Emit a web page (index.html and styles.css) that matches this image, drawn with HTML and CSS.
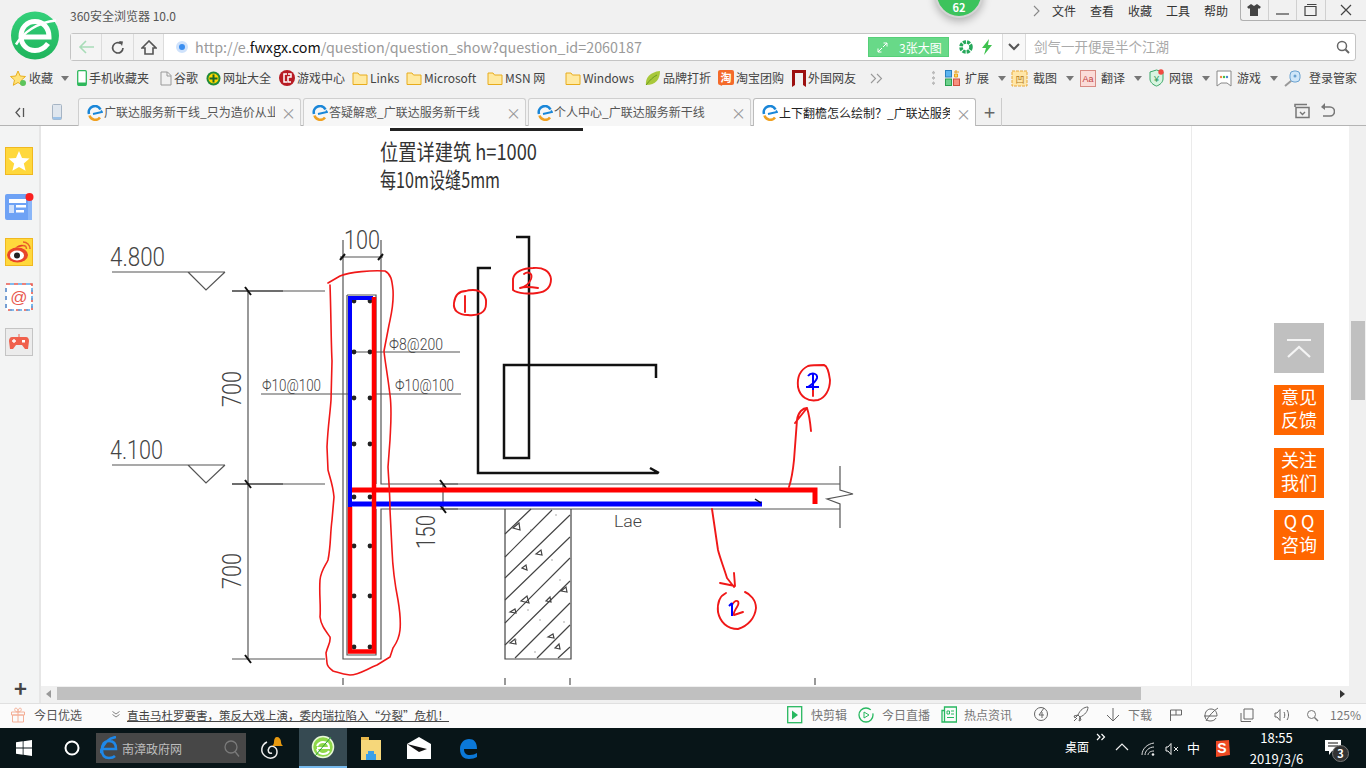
FILE: index.html
```html
<!DOCTYPE html>
<html lang="zh-CN">
<head>
<meta charset="utf-8">
<title>360安全浏览器</title>
<link rel="stylesheet" href="styles.css">
</head>
<body>
<svg class="defs" width="0" height="0" aria-hidden="true">
  <symbol id="folder" viewBox="0 0 16 16"><path d="M1 3h5l1.500 2H15v9.500H1z" fill="#ffe9a0" stroke="#e8ac1c"/></symbol>
  <symbol id="tabe" viewBox="0 0 16 16"><path d="M2 9a6.200 6.200 0 0 1 11.500-4.500" fill="none" stroke="#1a86d8" stroke-width="2.600"/><path d="M14 5.500l1 1.500-9 2" fill="none" stroke="#1a86d8" stroke-width="1.800"/><path d="M2.500 10.500a6 6 0 0 0 10.500 2" fill="none" stroke="#f0a020" stroke-width="2.600"/></symbol>
  <symbol id="caret" viewBox="0 0 8 5"><path d="M0 0h8L4 5z" fill="#777"/></symbol>
</svg>

<div class="chrome">
  <header class="top">
    <div class="logo-col">
      <svg class="logo" viewBox="0 0 48 48"><defs><linearGradient id="lg" x1="0" y1="0" x2="0" y2="1"><stop offset="0" stop-color="#34d07a"/><stop offset="1" stop-color="#1fb45c"/></linearGradient></defs><circle cx="24" cy="24" r="24" fill="url(#lg)"/><path d="M10 25.500H38C38 16 32 10 24 10C16 10 10 16 10 25C10 33 16 39 24 39C30 39 34 36 37 32" fill="none" stroke="#fff" stroke-width="5"/><path d="M5 33C12 21 26 11 45 9" fill="none" stroke="#fff" stroke-width="2.500"/></svg>
    </div>
    <div class="top-right">
      <div class="title-row">
        <span class="app-title">360安全浏览器 10.0</span>
        <svg class="menu-chev" width="7" height="12" viewBox="0 0 7 12"><path d="M1 1l5 5-5 5" fill="none" stroke="#888" stroke-width="1.100"/></svg>
        <nav class="menu"><span>文件</span><span>查看</span><span>收藏</span><span>工具</span><span>帮助</span></nav>
        <div class="winbtns">
          <span class="wb"><svg width="14" height="12" viewBox="0 0 14 12"><path d="M4 0L0 3l2 2 1-1v8h8V4l1 1 2-2-4-3-3 2z" fill="#444"/></svg></span>
          <span class="wb"><svg width="13" height="12" viewBox="0 0 13 12"><path d="M0 10h13" stroke="#444" stroke-width="1.200"/></svg></span>
          <span class="wb wb3"><svg width="13" height="12" viewBox="0 0 13 12"><path d="M1 2.500h11v9H1zM3 .5h9.500" fill="none" stroke="#444" stroke-width="1.200"/></svg></span>
          <span class="wb wb4"><svg width="12" height="12" viewBox="0 0 12 12"><path d="M1 1l10 10M11 1L1 11" stroke="#444" stroke-width="1.200"/></svg></span>
        </div>
      </div>
      <div class="addr">
        <span class="nav-btn nb1"><svg width="17" height="14" viewBox="0 0 17 14"><path d="M16 7H2M8 1L2 7l6 6" fill="none" stroke="#a8dcb8" stroke-width="1.600"/></svg></span>
        <span class="nav-btn nb2"><svg width="14" height="15" viewBox="0 0 14 15"><path d="M12 8a5.200 5.200 0 1 1-2-4.300" fill="none" stroke="#555" stroke-width="1.700"/><path d="M8 1l4 .5L11 6z" fill="#555"/></svg></span>
        <span class="nav-btn nb3"><svg width="16" height="15" viewBox="0 0 16 15"><path d="M1 8l7-7 7 7h-3v6H4V8z" fill="none" stroke="#555" stroke-width="1.600"/></svg></span>
        <span class="url-dot"></span>
        <span class="url">http://e.<b>fwxgx.com</b>/question/question_show?question_id=2060187</span>
        <span class="big-pic"><svg width="11" height="11" viewBox="0 0 11 11"><path d="M6.500 1H10v3.500M10 1L6 5M4.500 10H1V6.500M1 10l4-4" fill="none" stroke="#fff"/></svg><span>3张大图</span></span>
        <svg class="shield" width="14" height="14" viewBox="0 0 14 14"><circle cx="7" cy="7" r="5" fill="none" stroke="#25a85a" stroke-width="3.600" stroke-dasharray="3 1"/></svg>
        <svg class="bolt" width="12" height="16" viewBox="0 0 12 16"><path d="M8 0L1 9h4l-2 7 8-10H7z" fill="#3ec24e"/></svg>
        <span class="addr-drop"><svg width="12" height="8" viewBox="0 0 12 8"><path d="M1 1l5 5 5-5" fill="none" stroke="#555" stroke-width="2"/></svg></span>
        <span class="search-text">剑气一开便是半个江湖</span>
        <svg class="search-ico" width="14" height="14" viewBox="0 0 14 14"><circle cx="6" cy="6" r="4.500" fill="none" stroke="#666" stroke-width="1.500"/><path d="M9.500 9.500L13 13" stroke="#666" stroke-width="2"/></svg>
      </div>
    </div>
  </header>

  <div class="bookmarks">
    <span class="bm"><svg width="17" height="17" viewBox="0 0 17 17"><path d="M8 1l2.200 5 5.300.5-4 3.500 1.200 5.300L8 12.500l-4.700 2.800L4.500 10l-4-3.500L5.800 6z" fill="#ffe27a" stroke="#e8b020"/><circle cx="13" cy="13" r="3" fill="#5cc45c"/></svg>收藏<svg class="caret car-fav"><use href="#caret"/></svg></span>
    <span class="bm"><svg width="10" height="16" viewBox="0 0 10 16"><rect x=".7" y=".7" width="8.600" height="14.600" rx="1" fill="#fff" stroke="#2eb85c" stroke-width="1.300"/><path d="M1 12.500h8v3H1z" fill="#2eb85c"/></svg>手机收藏夹</span>
    <span class="bm"><svg width="12" height="15" viewBox="0 0 12 15"><path d="M1 1h6.500L11 4.500V14H1zM7 1v4h4" fill="none" stroke="#999"/></svg>谷歌</span>
    <span class="bm"><svg width="15" height="15" viewBox="0 0 15 15"><circle cx="7.500" cy="7.500" r="7" fill="#1f8a3a"/><circle cx="7.500" cy="7.500" r="5" fill="#ffd800"/><path d="M7.500 3.500v8M3.500 7.500h8" stroke="#1a6a2a" stroke-width="2"/></svg>网址大全</span>
    <span class="bm"><svg width="16" height="16" viewBox="0 0 16 16"><circle cx="8" cy="8" r="8" fill="#b81c24"/><path d="M8 4H5v8h3M9 4h3v3H9v5h3" fill="none" stroke="#fff" stroke-width="1.500"/></svg>游戏中心</span>
    <span class="bm"><svg class="fold"><use href="#folder"/></svg>Links</span>
    <span class="bm"><svg class="fold"><use href="#folder"/></svg>Microsoft</span>
    <span class="bm"><svg class="fold"><use href="#folder"/></svg>MSN 网</span>
    <span class="bm"><svg class="fold"><use href="#folder"/></svg>Windows</span>
    <span class="bm"><svg width="16" height="16" viewBox="0 0 16 16"><path d="M1 15C0 8 5 2 15 1c0 8-4 14-14 14z" fill="#a8c83a"/><path d="M1 15C5 10 8 7 12 5" stroke="#6a9a20" fill="none"/></svg>品牌打折</span>
    <span class="bm"><svg width="16" height="17" viewBox="0 0 16 17"><rect width="16" height="15" rx="2" fill="#f46a2a"/><path d="M3 16l3-2H2z" fill="#f46a2a"/><text x="8" y="12" class="taobao">淘</text></svg>淘宝团购</span>
    <span class="bm"><svg width="14" height="17" viewBox="0 0 14 17"><path d="M0 0h14v17l-3-2V3H3v12l-3 2z" fill="#9c1010"/></svg>外国网友</span>
    <span class="bm more"><svg width="14" height="11" viewBox="0 0 14 11"><path d="M1 1l4.500 4.500L1 10M7 1l4.500 4.500L7 10" fill="none" stroke="#999" stroke-width="1.100"/></svg></span>
    <span class="bm dots"></span>
    <span class="bm wide"><svg width="15" height="16" viewBox="0 0 15 16"><rect x=".5" y=".5" width="6" height="6.500" fill="#5cb4f0" stroke="#2a80c0"/><path d="M11 0v3M9 2h5M9.500 4h3v3h-3z" stroke="#e8a020" fill="#ffd860"/><rect x=".5" y="9" width="6" height="6.500" fill="#6cd08c" stroke="#2aa050"/><rect x="8.500" y="9" width="6" height="6.500" fill="#f89080" stroke="#d05040"/></svg>扩展<svg class="caret car-r"><use href="#caret"/></svg></span>
    <span class="bm wide"><svg width="17" height="17" viewBox="0 0 17 17"><rect x="1" y="1" width="15" height="15" fill="#ffe6a8" stroke="#e8a838" stroke-dasharray="3 1"/><text x="9" y="13" class="cap">凹</text></svg>截图<svg class="caret car-r"><use href="#caret"/></svg></span>
    <span class="bm wide"><svg width="16" height="17" viewBox="0 0 16 17"><rect x=".5" y=".5" width="15" height="16" fill="#fbdcd8" stroke="#d88c84"/><text x="8" y="12" class="aa">Aa</text></svg>翻译<svg class="caret car-r"><use href="#caret"/></svg></span>
    <span class="bm wide"><svg width="15" height="18" viewBox="0 0 15 18"><path d="M1 3l6.500-2L14 3v7c0 3-3 6-6.500 7C4 16 1 13 1 10z" fill="#d8f4e0" stroke="#3aa868"/><text x="7.500" y="13" class="yen">&#xA5;</text><circle cx="12" cy="3" r="2.700" fill="#f04a40"/></svg>网银<svg class="caret car-r"><use href="#caret"/></svg></span>
    <span class="bm wide"><svg width="16" height="17" viewBox="0 0 16 17"><path d="M1 1h14v15l-4-3H5l-4 3z" fill="#fff" stroke="#888"/><circle cx="5" cy="7" r="1.200" fill="#e84"/><circle cx="8" cy="7" r="1.200" fill="#4b4"/><circle cx="11" cy="7" r="1.200" fill="#48c"/></svg>游戏<svg class="caret car-r"><use href="#caret"/></svg></span>
    <span class="bm wide login"><svg width="17" height="17" viewBox="0 0 17 17"><rect x="6" y="1" width="10" height="11" rx="4" fill="#cfe6f8" stroke="#6aa2d0"/><circle cx="11" cy="6" r="1.500" fill="#6aa2d0"/><path d="M7 11l-6 5" stroke="#999" stroke-width="2"/></svg>登录管家</span>
  </div>

  <div class="tabbar">
    <span class="tab-side"><svg width="10" height="11" viewBox="0 0 10 11"><path d="M5 1L1 5.500 5 10M8.500 1v9" fill="none" stroke="#555" stroke-width="1.300"/></svg></span>
    <span class="tab-phone"><svg width="10" height="16" viewBox="0 0 10 16"><rect x=".5" y=".5" width="9" height="15" rx="1" fill="#dfe6ee" stroke="#a6b4c4"/><path d="M1 13h8v2.500H1z" fill="#9cc2e8"/></svg></span>
    <div class="tab"><svg class="fav"><use href="#tabe"/></svg><span class="tab-t">广联达服务新干线_只为造价从业人员服务</span><span class="tab-x">&#xD7;</span></div>
    <div class="tab"><svg class="fav"><use href="#tabe"/></svg><span class="tab-t">答疑解惑_广联达服务新干线</span><span class="tab-x">&#xD7;</span></div>
    <div class="tab"><svg class="fav"><use href="#tabe"/></svg><span class="tab-t">个人中心_广联达服务新干线</span><span class="tab-x">&#xD7;</span></div>
    <div class="tab active"><svg class="fav"><use href="#tabe"/></svg><span class="tab-t">上下翻檐怎么绘制？_广联达服务新干线</span><span class="tab-x">&#xD7;</span></div>
    <span class="tab-add">+</span>
    <span class="tab-tools">
      <svg width="16" height="16" viewBox="0 0 16 16"><path d="M1 4V1.500h12M2 14.500V4.500h13v10z" fill="none" stroke="#777" stroke-width="1.500"/><path d="M6 9l2.500 2.500L11 9" fill="none" stroke="#777" stroke-width="1.400"/></svg>
      <svg width="15" height="16" viewBox="0 0 15 16"><path d="M4 4h6a4 4 0 0 1 0 9H3" fill="none" stroke="#777" stroke-width="1.600"/><path d="M5 0v7L1 4z" fill="#777"/></svg>
    </span>
  </div>
</div>

<div class="middle">
  <aside class="sidebar">
    <span class="sb-ico"><svg width="28" height="28" viewBox="0 0 28 28"><rect x=".5" y=".5" width="27" height="27" fill="#ffd83c" stroke="#f0b820"/><path d="M14 4l3 7 7.500.6-5.700 4.900 1.800 7.300L14 20l-6.600 3.800 1.800-7.300L3.500 11.600 11 11z" fill="#fff"/></svg></span>
    <span class="sb-ico sb2"><svg width="29" height="27" viewBox="0 0 29 27"><rect y="1" width="27" height="26" rx="2" fill="#6ea2f5"/><path d="M23 4h4v23h-4z" fill="#8ab6f8"/><path d="M4 6h17v4H4z" fill="#fff"/><path d="M4 12h5v8H4z" fill="#cfe0fb"/><path d="M11 12h10v2.500H11zM11 17h8v2.500h-8z" fill="#fff"/><circle cx="24.500" cy="4" r="4" fill="#fa2020"/></svg></span>
    <span class="sb-ico sb3"><svg width="28" height="28" viewBox="0 0 28 28"><rect x=".5" y=".5" width="27" height="27" fill="#ffd83c" stroke="#f0b820"/><ellipse cx="12.500" cy="17" rx="10.500" ry="7.500" fill="#e8452a"/><path d="M10 10c4-4 8-4 9-2" fill="#e8452a"/><ellipse cx="12" cy="17.500" rx="7" ry="5" fill="#fff"/><circle cx="12" cy="17.500" r="3" fill="#222"/><path d="M18 4c4 0 7 3 7 7M18 7.500c2 0 3.500 1.500 3.500 3.500" fill="none" stroke="#e8652a" stroke-width="1.500"/></svg></span>
    <span class="sb-ico sb4"><svg width="28" height="28" viewBox="0 0 28 28"><rect x="1" y="1" width="26" height="26" fill="#fff" stroke="#e85a50" stroke-width="1.600" stroke-dasharray="4 4"/><path d="M5 1h4M13 1h4M21 1h4M27 5v4M27 13v4M27 21v4M5 27h4M13 27h4M21 27h4M1 5v4M1 13v4M1 21v4" stroke="#58a8ec" stroke-width="1.600"/><text x="14" y="20" class="at">@</text></svg></span>
    <span class="sb-ico sb5"><svg width="28" height="28" viewBox="0 0 28 28"><rect x=".5" y=".5" width="27" height="27" fill="#ececec" stroke="#c4c4c4"/><path d="M7 9h14c2 0 3 2 3 4l-1 8h-3l-3-4h-6l-3 4H5l-1-8c0-2 1-4 3-4z" fill="#f0604c"/><path d="M9 11v4M7 13h4" stroke="#fff" stroke-width="1.300"/><rect x="17" y="12" width="3" height="2.500" fill="#fff"/><path d="M13.500 9V6h1v3z" fill="#f0604c"/></svg></span>
    <span class="sb-plus">+</span>
  </aside>

  <div class="content">
    <div class="view">
      <main class="page">
        <svg class="draw" width="1151" height="560" viewBox="41 126 1151 560">
          <!-- typed heading -->
          <path d="M390 129.500H583" stroke="#222" stroke-width="3"/>
          <text x="380" y="160" class="cn" textLength="157" lengthAdjust="spacingAndGlyphs">位置详建筑 h=1000</text>
          <text x="380" y="188" class="cn" textLength="120" lengthAdjust="spacingAndGlyphs">每10m设缝5mm</text>

          <!-- levels -->
          <text x="110" y="266" class="dim d26" textLength="55" lengthAdjust="spacingAndGlyphs">4.800</text>
          <text x="110" y="459" class="dim d26" textLength="53" lengthAdjust="spacingAndGlyphs">4.100</text>
          <g fill="none" stroke="#555" stroke-width="1.200">
            <path d="M112 272H225M188 272l18 18 19-18M112 465H225M188 465l18 18 19-18"/>
            <path d="M232 291H325M232 484H325M232 659H325M248 291V659"/>
            <path d="M343 240V291M381 240V291M340 257H383"/>
            <path d="M343 291V659H381V509H840M381 291V484H840M347 295V655H376V509M347 295H376V484"/>
            <path d="M840 466V490L853 494 827 499 840 504V528"/>
            <path d="M440 484H458M440 509H458M443 484V509"/>
            <path d="M354 352H460M261 394H349M376 394H461"/>
            <path d="M343 678V685M505 678V685M570 678V685M815 678V685"/>
          </g>
          <path d="M232 291H283M232 484H283" stroke="#333" stroke-width="1.200"/>
          <g stroke="#111" stroke-width="2">
            <path d="M245 287l6 8M245 480l6 8M245 655l6 8M340 260l5-6M378 260l5-6M440 480l6 8M440 505l6 8"/>
          </g>
          <text x="344" y="249" class="dim d26" textLength="36" lengthAdjust="spacingAndGlyphs">100</text>
          <text transform="translate(241 407) rotate(-90)" class="dim d26" textLength="36" lengthAdjust="spacingAndGlyphs">700</text>
          <text transform="translate(241 589) rotate(-90)" class="dim d26" textLength="36" lengthAdjust="spacingAndGlyphs">700</text>
          <text transform="translate(435 549) rotate(-90)" class="dim d26" textLength="34" lengthAdjust="spacingAndGlyphs">150</text>
          <text x="389" y="350" class="dim d18" textLength="54" lengthAdjust="spacingAndGlyphs">&#x3A6;8@200</text>
          <text x="262" y="391" class="dim d18" textLength="59" lengthAdjust="spacingAndGlyphs">&#x3A6;10@100</text>
          <text x="395" y="391" class="dim d18" textLength="59" lengthAdjust="spacingAndGlyphs">&#x3A6;10@100</text>
          <text x="614" y="527" class="dim d18" textLength="28" lengthAdjust="spacingAndGlyphs">Lae</text>

          <!-- rebar dots -->
          <g fill="#222">
            <circle cx="354" cy="301" r="2.400"/><circle cx="370" cy="301" r="2.400"/>
            <circle cx="354" cy="352" r="2.400"/><circle cx="370" cy="352" r="2.400"/>
            <circle cx="354" cy="398" r="2.400"/><circle cx="370" cy="398" r="2.400"/>
            <circle cx="354" cy="444" r="2.400"/><circle cx="370" cy="444" r="2.400"/>
            <circle cx="354" cy="497" r="2.400"/><circle cx="370" cy="497" r="2.400"/>
            <circle cx="354" cy="546" r="2.400"/><circle cx="370" cy="546" r="2.400"/>
            <circle cx="354" cy="596" r="2.400"/><circle cx="370" cy="596" r="2.400"/>
            <circle cx="354" cy="647" r="2.400"/><circle cx="370" cy="647" r="2.400"/>
          </g>

          <!-- bar details -->
          <g fill="none" stroke="#111" stroke-width="2.500">
            <path d="M516 237H529V458H504V365H656V378"/>
            <path d="M491 268H478V473H658M650 468l9 5"/>
          </g>

          <!-- masonry -->
          <g fill="none" stroke="#444" stroke-width="1.200">
            <path d="M505 509V659H571V509"/>
            <path d="M505 534L531 509M505 557L552 510M505 578L570 515M505 600L570 537M505 623L570 558M505 645L570 581M515 658L570 603M537 658L570 625M558 658L570 647"/>
            <path d="M513 528l6 -5 1 7zM536 554l5 -4 1 5zM522 568l4 -3 1 5zM521 601l6-5 2 7zM510 612l5-3 1 4zM561 591l5-4 1 5zM546 601l4-4 1 5zM510 643l5-4 1 5zM548 637l5-3 1 4zM555 648l4-4 1 5z"/>
          </g>
          <g fill="#888">
            <circle cx="531" cy="530" r=".7"/><circle cx="556" cy="515" r=".7"/><circle cx="552" cy="560" r=".7"/><circle cx="528" cy="610" r=".7"/><circle cx="560" cy="580" r=".7"/><circle cx="540" cy="620" r=".7"/><circle cx="516" cy="640" r=".7"/><circle cx="535" cy="652" r=".7"/><circle cx="564" cy="622" r=".7"/>
          </g>

          <!-- coloured bars -->
          <path d="M350 507V298H373" fill="none" stroke="#0000ff" stroke-width="4"/>
          <path d="M352 490H815V504" fill="none" stroke="#ff0000" stroke-width="5"/>
          <path d="M348 504H762" fill="none" stroke="#0000ff" stroke-width="5"/>
          <path d="M350 507V651.500H374V297" fill="none" stroke="#ff0000" stroke-width="4.500"/>
          <path d="M755 499l6 4" stroke="#111" stroke-width="1.500"/>

          <!-- handwriting -->
          <g fill="none" stroke="#f01818" stroke-width="1.600" stroke-linejoin="round" stroke-linecap="round">
            <path d="M328 283L340 276C350 272 372 270 385 271C391 274 392 280 393 290C394 305 391 315 389 325L384 351C385 362 387 370 390 395C392 410 391 420 390 440L388 467C389 485 390 495 390 510L392 550C393 575 396 590 398 600C400 612 401 620 400 630C399 640 395 645 393 648L390 657C385 660 382 662 377 665C365 670 358 675 350 675C342 674 337 672 333 671C329 668 327 666 327 663L326 653C328 645 331 642 330 637C325 630 321 625 320 617C321 605 319 595 320 580C321 570 326 565 328 560C331 545 330 535 332 520L334 497C333 485 330 478 328 470L327 447C328 425 330 415 331 400L332 361C331 340 331 310 330 285"/>
          </g>
          <g fill="none" stroke="#f01818" stroke-width="1.900" stroke-linejoin="round" stroke-linecap="round">
            <path d="M466 291C459 291 455 295 454 303C453 310 458 315 468 315C478 316 486 313 486 304C487 297 482 290 473 290C470 290 468 290 466 291M465 296V312"/>
            <path d="M513 279C514 272 523 268 533 268C543 267 550 271 551 279C551 287 546 292 537 293C530 294 518 294 513 290ZM524 274C528 271 533 273 531 279C529 284 525 287 520 288C526 286 532 287 538 288"/>
            <path d="M789 487C792 478 793 470 794 460L797 420C798 412 803 408 807 408M795 423L807 408C809 414 810 420 811 431"/>
            <path d="M808 366C800 370 797 378 798 387C800 397 808 402 818 400C825 398 830 390 830 380C829 372 827 366 824 365C818 365 812 365 808 366M813 374V396"/>
            <path d="M712 509L718 550C720 558 724 568 727 578L734 587M720 583L735 586L734 573"/>
            <path d="M726 593C720 596 717 602 718 612C720 622 727 629 738 629C748 626 755 618 756 608C756 600 750 594 745 592M732 605C736 598 741 601 737 607C735 610 733 613 734 615L743 612"/>
          </g>
          <path d="M813 374V390M806 387H819M808 376C811 372 818 373 817 378C816 382 811 385 808 387" fill="none" stroke="#0000ff" stroke-width="2"/>
          <path d="M732 603V616M729 606l3-3" fill="none" stroke="#0000ff" stroke-width="2"/>

          <path class="rail" d="M1192 126V686"/>
        </svg>
        <div class="float-btns">
          <span class="fb up"><svg width="26" height="20" viewBox="0 0 26 20"><path d="M1 2h24M2 19L13 9l11 10" fill="none" stroke="#f4f4f4" stroke-width="2.200"/></svg></span>
          <span class="fb">意见<br>反馈</span>
          <span class="fb">关注<br>我们</span>
          <span class="fb">Q Q<br>咨询</span>
        </div>
      </main>
      <div class="vscroll"><span class="vthumb"></span></div>
    </div>
    <div class="hscroll">
      <svg class="harrow" width="5" height="8" viewBox="0 0 5 8"><path d="M5 0v8L0 4z" fill="#999"/></svg>
      <span class="hthumb"></span>
      <svg class="harrow2" width="5" height="8" viewBox="0 0 5 8"><path d="M0 0v8l5-4z" fill="#333"/></svg>
    </div>
  </div>
</div>

<footer class="status">
  <span class="gift"><svg width="16" height="16" viewBox="0 0 16 16"><path d="M1.500 5h13v3h-13zM2.500 8h11v7h-11zM8 5v10M8 5C4 5 4 1 6 1c1 0 2 2 2 4 0-2 1-4 2-4 2 0 2 4-2 4" fill="none" stroke="#f4b098"/></svg></span>
  <span class="st-label">今日优选</span>
  <span class="st-chev"><svg width="8" height="7" viewBox="0 0 8 7"><path d="M.5.500L4 3l3.500-2.500M.5 3.500L4 6l3.500-2.500" fill="none" stroke="#666" stroke-width=".8"/></svg></span>
  <span class="headline">直击马杜罗要害，策反大戏上演，委内瑞拉陷入“分裂”危机！</span>
  <div class="st-right">
    <span class="st-i s1"><svg width="16" height="18" viewBox="0 0 16 18"><rect x=".7" y=".7" width="14" height="16" fill="none" stroke="#28b860" stroke-width="1.300"/><path d="M5 4.500v9L11 9z" fill="#28b860"/></svg></span><span class="st-t t1">快剪辑</span>
    <span class="st-i s2"><svg width="16" height="18" viewBox="0 0 16 18"><circle cx="8" cy="9" r="7" fill="none" stroke="#28b860" stroke-width="1.300" stroke-dasharray="38 4"/><path d="M6 6v6l5-3z" fill="none" stroke="#28b860"/></svg></span><span class="st-t t2">今日直播</span>
    <span class="st-i s3"><svg width="16" height="18" viewBox="0 0 16 18"><path d="M3.500 1h12v15H1V4.500h2.500zM3.500 4.500V16" fill="none" stroke="#28b860" stroke-width="1.300"/><path d="M6 5h2.500v3H6zM10 5h3M10 8h3M6 11.500h7" fill="none" stroke="#28b860"/></svg></span><span class="st-t t3">热点资讯</span>
    <span class="st-i s4"><svg width="16" height="16" viewBox="0 0 16 16"><circle cx="8" cy="8" r="6.500" fill="none" stroke="#666"/><path d="M11 2l-5 7h5M9 6v6" fill="none" stroke="#666"/></svg></span>
    <span class="st-i s5"><svg width="16" height="16" viewBox="0 0 16 16"><path d="M15 1c-4 0-8 3-10 8l2 2c5-2 8-6 8-10zM5 9L1 10l1 2zM7 11l-1 4 2-1zM4 12l-3 3" fill="none" stroke="#666"/></svg></span>
    <span class="st-i s6"><svg width="14" height="14" viewBox="0 0 14 14"><path d="M7 0v13M1 7l6 6 6-6" fill="none" stroke="#666"/></svg></span><span class="st-t t6">下载</span>
    <span class="st-i s7"><svg width="14" height="14" viewBox="0 0 14 14"><path d="M1.500 13V2h11v5H7V2M7 7H1.500" fill="none" stroke="#666"/></svg></span>
    <span class="st-i s8"><svg width="16" height="16" viewBox="0 0 16 16"><path d="M1 9h13C14 4 11 2 8 2 4 2 2 5 2 9c0 3 2 5 5 5 3 0 5-1 6-3M3 14C6 9 10 4 15 1" fill="none" stroke="#666"/></svg></span>
    <span class="st-i s9"><svg width="14" height="14" viewBox="0 0 14 14"><path d="M4 1h9v10H4zM1 5v8.500h10" fill="none" stroke="#666"/></svg></span>
    <span class="st-i s10"><svg width="16" height="14" viewBox="0 0 16 14"><path d="M1 5h2l3-3.500v11L3 9H1zM10 4c1 2 1 4 0 6M13 2c2 3 2 7 0 10" fill="none" stroke="#666"/></svg></span>
    <span class="st-i s11"><svg width="13" height="13" viewBox="0 0 13 13"><circle cx="5.500" cy="5.500" r="4" fill="none" stroke="#777"/><path d="M8.500 8.500L12 12" stroke="#777" stroke-width="1.400"/></svg></span>
    <span class="st-t t11">125%</span>
  </div>
</footer>

<footer class="taskbar">
  <span class="tb-win"><svg width="16" height="16" viewBox="0 0 16 16"><path d="M0 2.300L6.700 1.300V7.600H0zM7.500 1.200L16 0v7.600H7.500zM0 8.400H6.700V14.700L0 13.700zM7.500 8.400H16V16L7.500 14.800z" fill="#fff"/></svg></span>
  <span class="tb-cortana"><svg width="16" height="16" viewBox="0 0 16 16"><circle cx="8" cy="8" r="6.500" fill="none" stroke="#fff" stroke-width="2"/></svg></span>
  <div class="tb-search">
    <svg width="18" height="24" viewBox="0 0 18 24"><path d="M2 13h14c0-5-2-8-7-8-5 0-7 4-7 9 0 6 3 8 7 8 3 0 5-1 6-2M0 17C3 8 9 2 16 1" fill="none" stroke="#1e88e8" stroke-width="2.500"/></svg>
    <span class="tb-s-t">南漳政府网</span>
    <svg class="tb-mag" width="16" height="17" viewBox="0 0 16 17"><circle cx="7" cy="7" r="6" fill="none" stroke="#7a7a7a" stroke-width="1.300"/><path d="M11 11.500l4 5" stroke="#7a7a7a" stroke-width="1.300"/></svg>
  </div>
  <span class="tb-i swirl"><svg width="28" height="26" viewBox="0 0 28 26"><path d="M8 7c-6 3-7 10-2 14s12 2 12-4-6-7-8-4 0 6 3 5" fill="none" stroke="#eee" stroke-width="1.500"/><path d="M18 2c2 0 4 2 4 5 0 2 1 3 2 4H13c1-1 2-2 2-4 0-3 1-5 3-5z" fill="#e89a10"/></svg></span>
  <span class="tb-i active"><svg width="24" height="26" viewBox="0 0 24 26"><circle cx="12" cy="13" r="10.500" fill="#8fd84a" stroke="#e8f8d8" stroke-width="1.500"/><path d="M6 14h12c0-4-2-6-6-6-3 0-5 2-6 4M18 17c-1 2-3 3-6 3-3 0-5-2-6-5" fill="none" stroke="#fff" stroke-width="2"/><path d="M4 22L20 3" stroke="#2a9a3a"/></svg></span>
  <span class="tb-i"><svg width="22" height="24" viewBox="0 0 22 24"><path d="M1 1h8v3h12v20H1z" fill="#f6d77a"/><path d="M1 1h8v3H1z" fill="#e8b84a"/><path d="M8 15h6v3H8zM6 18h10v6H6z" fill="#3ba0e8"/></svg></span>
  <span class="tb-i"><svg width="24" height="22" viewBox="0 0 24 22"><path d="M0 7L12 0l12 7v15H0z" fill="#fff"/><path d="M0 7l20 5-8 3z" fill="#111"/></svg></span>
  <span class="tb-i tb-edge"><svg width="20" height="24" viewBox="0 0 20 24"><path d="M2 13h16c0-7-3-10-8-10S1 7 1 13c0 7 4 10 9 10 3 0 6-1 8-2v-4c-2 1-4 2-7 2-4 0-6-2-6-6" fill="#0b78d8"/><path d="M6 9h8" stroke="#0b78d8" stroke-width="3"/></svg></span>
  <div class="tb-right">
    <span class="tb-desk">桌面</span>
    <svg class="tb-more" width="10" height="8" viewBox="0 0 10 8"><path d="M1 1l3 3-3 3M5.500 1l3 3-3 3" fill="none" stroke="#fff" stroke-width="1.200"/></svg>
    <svg class="tr-up" width="14" height="8" viewBox="0 0 14 8"><path d="M1 7l6-6 6 6" fill="none" stroke="#eee" stroke-width="1.200"/></svg>
    <svg class="tr-wifi" width="14" height="14" viewBox="0 0 14 14"><path d="M1 13C1 7 6 2 13 1M4 13c0-4 4-8 9-8M7 13c0-2 2-4 6-4" fill="none" stroke="#ddd"/><circle cx="12" cy="12.500" r="1.300" fill="#eee"/></svg>
    <svg class="tr-vol" width="14" height="14" viewBox="0 0 14 14"><path d="M1 5h2l3-3.500v11L3 9H1zM9 5l4 4M13 5L9 9" fill="none" stroke="#eee"/></svg>
    <span class="tr-zh">中</span>
    <svg class="tr-s" width="16" height="17" viewBox="0 0 16 17"><path d="M2 1l13-1 1 15-14 2z" fill="#ef4a23"/><text x="8" y="13" class="sogou">S</text></svg>
    <span class="clock"><span>18:55</span><span>2019/3/6</span></span>
    <span class="notif"><svg width="16" height="15" viewBox="0 0 16 15"><path d="M0 0h16v11H7l-3 4v-4H0z" fill="#fff"/><path d="M3 3h10M3 6h10" stroke="#111"/></svg><span class="notif-badge">3</span></span>
  </div>
</footer>

<div class="badge"><span>62</span></div>
</body>
</html>
```

FILE: styles.css
```css
* { box-sizing: border-box; }
html, body { margin: 0; padding: 0; }
body {
  width: 1366px;
  height: 768px;
  overflow: hidden;
  position: relative;
  display: flex;
  flex-direction: column;
  font-family: "Noto Sans CJK SC", "Open Sans", sans-serif;
  font-size: 12px;
  color: #444;
  background: #f2f2f2;
}
.defs { position: absolute; }
svg { display: block; flex: none; }

/* chrome */
.chrome { height: 126px; background: #f1f1f1; border-bottom: 1px solid #b4b4b4; flex: none; }
.top { display: flex; height: 62px; }
.logo-col { width: 70px; padding: 11px 0 0 11px; }
.logo { width: 48px; height: 49px; }
.top-right { flex: 1; padding-right: 10px; }
.title-row { height: 33px; display: flex; position: relative; }
.app-title { margin-top: 8px; line-height: 16px; color: #555; font-size: 12px; }
.menu-chev { position: absolute; left: 963px; top: 5px; }
.menu { position: absolute; left: 982px; top: 2px; display: flex; gap: 14px; color: #333; line-height: 18px; }
.winbtns {
  position: absolute; left: 1170px; top: 0; width: 126px; height: 21px;
  display: flex; border: 1px solid #b0b0b0; border-top: 0; border-right: 0; border-radius: 0 0 0 3px;
}
.wb { width: 28px; display: flex; align-items: center; justify-content: center; border-right: 1px solid #d0d0d0; }
.wb3 { width: 30px; }
.wb4 { width: 40px; border: 0; }

.addr {
  height: 28px; display: flex; align-items: center; position: relative;
  background: #fff; border: 1px solid #c4c4c4; border-radius: 3px; font-size: 14px;
}
.nav-btn { height: 26px; display: flex; align-items: center; justify-content: center; background: #f4f4f4; border-right: 1px solid #dcdcdc; }
.nb1 { width: 31px; }
.nb2 { width: 32px; }
.nb3 { width: 30px; }
.url-dot { width: 12px; height: 12px; margin-left: 12px; border-radius: 50%; background: #3a8ef0; border: 3px solid #cfe2fb; }
.url { margin-left: 7px; color: #9a9a9a; font-size: 14.340px; white-space: nowrap; width: 673px; padding-bottom: 2px; }
.url b { color: #111; font-weight: 400; }
.big-pic {
  width: 81px; height: 20px; background: #68d988; border: 1px solid #56cf78; color: #fff;
  display: flex; align-items: center; padding-left: 8px; gap: 11px; font-size: 12px;
}
.shield { margin-left: 10px; }
.bolt { margin-left: 8px; }
.addr-drop { margin-left: 9px; width: 24px; height: 26px; display: flex; align-items: center; justify-content: center; border-left: 1px solid #dcdcdc; border-right: 1px solid #dcdcdc; background: #f8f8f8; }
.search-text { margin-left: 8px; color: #aaa; font-size: 13.500px; padding-bottom: 2px; }
.search-ico { position: absolute; right: 5px; top: 6px; }

.bookmarks {
  height: 34px; padding: 0 0 2px 10px;
  display: grid; align-items: center;
  grid-template-columns: 67px 83px 46px 73px 73px 54px 81px 78px 80px 73px 74px 78px 62px 13px 66px 69px 69px 67px 68px 72px;
}
.bm { display: flex; align-items: center; gap: 2px; white-space: nowrap; color: #444; font-size: 12px; line-height: 18px; position: relative; }
.bm.wide { gap: 5px; }
.login { gap: 8px !important; }
.fold { width: 16px; height: 16px; }
.caret { width: 8px; height: 5px; }
.car-fav { margin-left: 6px; }
.car-r { margin-left: 4px; }
.dots { width: 3px; height: 16px; background: radial-gradient(circle, #bbb 1.400px, transparent 1.600px) 0 0 / 3px 5.300px; }
.taobao { font-size: 11px; fill: #fff; text-anchor: middle; font-weight: 700; }
.cap { font-size: 9px; fill: #b07820; text-anchor: middle; }
.aa { font-size: 9px; fill: #c04040; text-anchor: middle; font-family: "Liberation Sans", sans-serif; }
.yen { font-size: 9px; fill: #2a9a58; text-anchor: middle; font-family: "Liberation Sans", sans-serif; }

.tabbar { height: 30px; padding-top: 1px; display: flex; align-items: flex-end; position: relative; }
.tab-side { width: 52px; height: 28px; padding: 9px 0 0 15px; }
.tab-phone { width: 26px; height: 28px; padding-top: 6px; }
.tab {
  width: 223px; height: 28px; margin-right: 2px; padding: 0 5px 0 8px;
  display: flex; align-items: center;
  background: #f6f6f6; border: 1px solid #cfcfcf; border-bottom: 0; border-radius: 3px 3px 0 0;
}
.tab.active { background: #fff; border-color: #bcbcbc; height: 29px; margin-bottom: -1px; }
.fav { width: 16px; height: 16px; }
.tab-t { flex: 1; min-width: 0; margin: 0 6px 0 1px; padding-bottom: 2px; overflow: hidden; white-space: nowrap; color: #555; font-size: 12px; }
.active .tab-t { color: #222; }
.tab-x { flex: none; width: 14px; text-align: center; font-size: 15px; color: #999; }
.tab-add { width: 24px; text-align: center; font-size: 20px; line-height: 28px; color: #666; border-right: 1px solid #ccc; height: 28px; }
.tab-tools { position: absolute; left: 1294px; top: 7px; display: flex; gap: 10px; }

/* middle */
.middle { flex: none; height: 577px; display: flex; background: #fff; }
.sidebar { width: 41px; background: #f3f4f4; border-right: 2px solid #e6e6e6; padding: 21px 0 0 5px; display: flex; flex-direction: column; }
.sb-ico { height: 28px; }
.sb2 { margin-top: 18px; }
.sb3 { margin-top: 17px; }
.sb4 { margin-top: 17px; }
.sb5 { margin-top: 17px; }
.sb-plus { margin: auto 0 3px 9px; font-size: 22px; line-height: 26px; color: #444; font-weight: 700; }
.content { flex: 1; display: flex; flex-direction: column; min-width: 0; }
.view { height: 560px; display: flex; position: relative; }
.page { flex: 1; background: #fff; overflow: hidden; }
.draw { font-family: "Noto Sans CJK SC", sans-serif; }
.rail { stroke: #e4e4e4; stroke-width: 1.500; fill: none; }
.cn { font-size: 22px; fill: #333; }
.dim { font-family: Roboto, "Liberation Sans", sans-serif; font-weight: 300; fill: #444; }
.d26 { font-size: 26px; }
.d18 { font-size: 17px; }
.at { font-size: 17px; fill: #e85a50; text-anchor: middle; font-family: "Liberation Sans", sans-serif; }

.float-btns { position: absolute; right: 42px; top: 197px; display: flex; flex-direction: column; gap: 12px; }
.fb {
  width: 50px; height: 50px; background: #ff6600; color: #fff;
  display: block; text-align: center;
  font-size: 18px; line-height: 23px; padding-top: 0;
}
.fb:nth-child(3) { margin-top: 1px; }
.fb.up { background: #c0c0c0; padding: 15px 12px 0; }
.vscroll { width: 17px; background: #f0f0f0; padding: 195px 1px 0 2px; }
.vthumb { display: block; height: 79px; background: #c0c0c0; }
.hscroll { height: 17px; background: #f0f0f0; position: relative; padding: 1px 0 0 16px; }
.hthumb { display: block; width: 1084px; height: 13px; background: #c0c0c0; }
.harrow { position: absolute; left: 5px; top: 4px; }
.harrow2 { position: absolute; left: 1299px; top: 4px; }

/* status */
.status {
  flex: none; height: 25px; background: #fbfbfb; border-top: 1px solid #e0e0e0; padding-bottom: 3px;
  display: flex; align-items: center; position: relative; font-size: 12px; color: #555;
}
.gift { margin-left: 10px; }
.st-label { margin-left: 8px; }
.st-chev { margin-left: 30px; }
.headline { margin-left: 7px; color: #444; text-decoration: underline; white-space: nowrap; font-size: 11.500px; }
.st-right { position: absolute; left: 0; top: 0; height: 25px; width: 1366px; pointer-events: none; }
.st-i, .st-t { position: absolute; top: 2px; line-height: 18px; color: #777; }
.s1 { left: 787px; } .t1 { left: 811px; }
.s2 { left: 858px; } .t2 { left: 882px; }
.s3 { left: 941px; } .t3 { left: 964px; }
.s4 { left: 1033px; }
.s5 { left: 1073px; }
.s6 { left: 1106px; top: 4px; } .t6 { left: 1128px; }
.s7 { left: 1169px; top: 4px; }
.s8 { left: 1203px; top: 3px; }
.s9 { left: 1240px; top: 4px; }
.s10 { left: 1274px; top: 4px; }
.s11 { left: 1306px; top: 5px; }
.t11 { left: 1330px; }

/* taskbar */
.taskbar { flex: none; height: 40px; background: #081518; display: flex; align-items: center; position: relative; color: #fff; }
.tb-win { margin-left: 16px; }
.tb-cortana { margin-left: 32px; }
.tb-search { margin-left: 16px; width: 150px; height: 30px; background: #474747; display: flex; align-items: center; padding-left: 4px; position: relative; }
.tb-s-t { margin-left: 4px; color: #bdbdbd; font-size: 12px; }
.tb-mag { position: absolute; right: 6px; top: 7px; }
.tb-i { width: 48px; height: 40px; display: flex; align-items: center; justify-content: center; }
.swirl { width: 53px; }
.tb-edge { margin-left: 2px; }
.active.tb-i { background: #364a52; border-bottom: 2px solid #76b9ed; }
.tb-right { position: absolute; left: 0; top: 0; width: 1366px; height: 40px; pointer-events: none; }
.tb-desk, .tb-more, .tr-up, .tr-wifi, .tr-vol, .tr-zh, .tr-s, .clock, .notif { position: absolute; }
.tb-desk { left: 1065px; top: 10px; font-size: 12px; line-height: 18px; }
.tb-more { left: 1096px; top: 5px; }
.tr-up { left: 1115px; top: 15px; }
.tr-wifi { left: 1141px; top: 14px; }
.tr-vol { left: 1165px; top: 14px; }
.tr-zh { left: 1187px; top: 11px; line-height: 18px; font-size: 13px; }
.tr-s { left: 1214px; top: 12px; }
.sogou { font-size: 14px; font-weight: 700; fill: #fff; text-anchor: middle; font-family: "Liberation Sans", sans-serif; }
.clock { left: 1240px; top: 2px; width: 73px; display: flex; flex-direction: column; align-items: center; gap: 5px; line-height: 16px; font-size: 13px; }
.notif { left: 1325px; top: 12px; width: 26px; height: 26px; }
.notif-badge { position: absolute; left: 7px; top: 5px; width: 17px; height: 17px; border-radius: 50%; background: #333; border: 1px solid #777; font-size: 11px; font-weight: 700; line-height: 15px; text-align: center; }

.badge {
  position: absolute; left: 935px; top: -30px; width: 48px; height: 48px; border-radius: 50%;
  background: #3cc35c; border: 2px solid #d4d4d4; box-shadow: 0 3px 8px rgba(0,0,0,.28);
  color: #fff; font-size: 11px; font-weight: 700; text-align: center; padding-top: 28px; line-height: 14px;
}
```
